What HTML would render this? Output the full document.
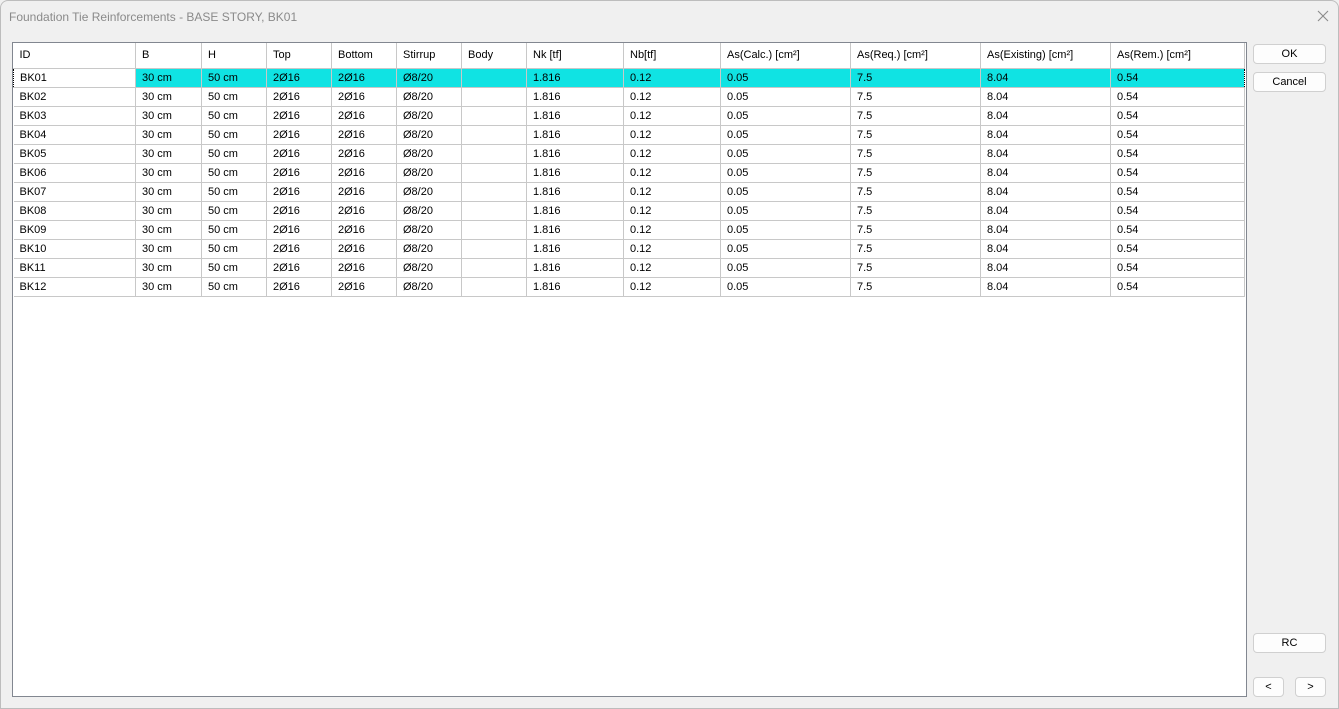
<!DOCTYPE html>
<html><head><meta charset="utf-8"><style>
*{margin:0;padding:0;box-sizing:border-box}
body{width:1339px;height:709px;background:#f0f0f0;font-family:"Liberation Sans",sans-serif;font-size:11px;color:#000;position:relative;overflow:hidden}
.win{position:absolute;left:0;top:0;width:1339px;height:709px;border:1px solid #bdbdbd;border-radius:8px 8px 0 0;background:#f0f0f0}
.title{position:absolute;left:8px;top:9px;font-size:12px;color:#8a8a8a}
.close{position:absolute;left:1315px;top:8px;width:14px;height:14px}
.grid{position:absolute;left:11px;top:41px;width:1235px;height:655px;background:#fff;border:1px solid #828790}
table{position:absolute;left:0;top:0;border-collapse:collapse;table-layout:fixed}
td{height:19px;border:1px solid #c8c8c8;padding:1px 0 0 6px;white-space:nowrap;overflow:hidden;line-height:17px}
tr.h td{height:25px;border-top:none;line-height:24px;padding-top:0}
tr td:first-child{border-left:none}
tr.sel td{background:#10e3e3;border-top:1px dotted #000;border-bottom:1px dotted #000}
tr.sel td:first-child{background:#fff;border-left:1px dotted #000}
tr.sel td:last-child{border-right:1px dotted #000}
.btn{position:absolute;background:#fdfdfd;border:1px solid #d0d0d0;border-radius:4px;text-align:center;font-size:11px;line-height:18px}
</style></head><body><div class="win">
<div class="title">Foundation Tie Reinforcements - BASE STORY, BK01</div>
<svg class="close" viewBox="0 0 14 14"><path d="M2 2L12 12M12 2L2 12" stroke="#8a8a8a" stroke-width="1.1"/></svg>
<div class="grid"><table>
<colgroup><col style="width:122px"><col style="width:66px"><col style="width:65px"><col style="width:65px"><col style="width:65px"><col style="width:65px"><col style="width:65px"><col style="width:97px"><col style="width:97px"><col style="width:130px"><col style="width:130px"><col style="width:130px"><col style="width:134px"></colgroup>
<tr class="h"><td>ID</td><td>B</td><td>H</td><td>Top</td><td>Bottom</td><td>Stirrup</td><td>Body</td><td>Nk [tf]</td><td>Nb[tf]</td><td>As(Calc.) [cm²]</td><td>As(Req.) [cm²]</td><td>As(Existing) [cm²]</td><td>As(Rem.) [cm²]</td></tr>
<tr class="sel"><td>BK01</td><td>30 cm</td><td>50 cm</td><td>2Ø16</td><td>2Ø16</td><td>Ø8/20</td><td></td><td>1.816</td><td>0.12</td><td>0.05</td><td>7.5</td><td>8.04</td><td>0.54</td></tr>
<tr><td>BK02</td><td>30 cm</td><td>50 cm</td><td>2Ø16</td><td>2Ø16</td><td>Ø8/20</td><td></td><td>1.816</td><td>0.12</td><td>0.05</td><td>7.5</td><td>8.04</td><td>0.54</td></tr>
<tr><td>BK03</td><td>30 cm</td><td>50 cm</td><td>2Ø16</td><td>2Ø16</td><td>Ø8/20</td><td></td><td>1.816</td><td>0.12</td><td>0.05</td><td>7.5</td><td>8.04</td><td>0.54</td></tr>
<tr><td>BK04</td><td>30 cm</td><td>50 cm</td><td>2Ø16</td><td>2Ø16</td><td>Ø8/20</td><td></td><td>1.816</td><td>0.12</td><td>0.05</td><td>7.5</td><td>8.04</td><td>0.54</td></tr>
<tr><td>BK05</td><td>30 cm</td><td>50 cm</td><td>2Ø16</td><td>2Ø16</td><td>Ø8/20</td><td></td><td>1.816</td><td>0.12</td><td>0.05</td><td>7.5</td><td>8.04</td><td>0.54</td></tr>
<tr><td>BK06</td><td>30 cm</td><td>50 cm</td><td>2Ø16</td><td>2Ø16</td><td>Ø8/20</td><td></td><td>1.816</td><td>0.12</td><td>0.05</td><td>7.5</td><td>8.04</td><td>0.54</td></tr>
<tr><td>BK07</td><td>30 cm</td><td>50 cm</td><td>2Ø16</td><td>2Ø16</td><td>Ø8/20</td><td></td><td>1.816</td><td>0.12</td><td>0.05</td><td>7.5</td><td>8.04</td><td>0.54</td></tr>
<tr><td>BK08</td><td>30 cm</td><td>50 cm</td><td>2Ø16</td><td>2Ø16</td><td>Ø8/20</td><td></td><td>1.816</td><td>0.12</td><td>0.05</td><td>7.5</td><td>8.04</td><td>0.54</td></tr>
<tr><td>BK09</td><td>30 cm</td><td>50 cm</td><td>2Ø16</td><td>2Ø16</td><td>Ø8/20</td><td></td><td>1.816</td><td>0.12</td><td>0.05</td><td>7.5</td><td>8.04</td><td>0.54</td></tr>
<tr><td>BK10</td><td>30 cm</td><td>50 cm</td><td>2Ø16</td><td>2Ø16</td><td>Ø8/20</td><td></td><td>1.816</td><td>0.12</td><td>0.05</td><td>7.5</td><td>8.04</td><td>0.54</td></tr>
<tr><td>BK11</td><td>30 cm</td><td>50 cm</td><td>2Ø16</td><td>2Ø16</td><td>Ø8/20</td><td></td><td>1.816</td><td>0.12</td><td>0.05</td><td>7.5</td><td>8.04</td><td>0.54</td></tr>
<tr><td>BK12</td><td>30 cm</td><td>50 cm</td><td>2Ø16</td><td>2Ø16</td><td>Ø8/20</td><td></td><td>1.816</td><td>0.12</td><td>0.05</td><td>7.5</td><td>8.04</td><td>0.54</td></tr>
</table></div>
<div class="btn" style="left:1252px;top:43px;width:73px;height:20px">OK</div>
<div class="btn" style="left:1252px;top:71px;width:73px;height:20px">Cancel</div>
<div class="btn" style="left:1252px;top:632px;width:73px;height:20px">RC</div>
<div class="btn" style="left:1252px;top:676px;width:31px;height:20px">&lt;</div>
<div class="btn" style="left:1294px;top:676px;width:31px;height:20px">&gt;</div>
</div></body></html>
